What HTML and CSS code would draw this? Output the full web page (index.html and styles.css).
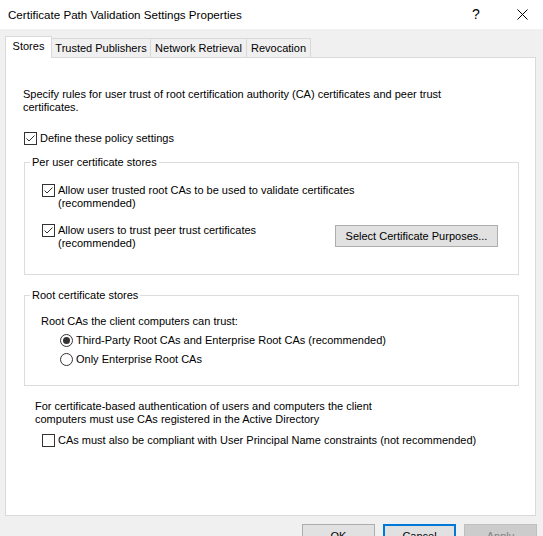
FILE: index.html
```html
<!DOCTYPE html>
<html>
<head>
<meta charset="utf-8">
<link rel="stylesheet" href="styles.css">
</head>
<body>
<div class="titlebar">
  <span class="title">Certificate Path Validation Settings Properties</span>
  <div class="caps">
    <span class="cap help">?</span>
    <span class="cap close"><svg width="11" height="11" viewBox="0 0 11 11"><path d="M0.5 0.5L10.5 10.5M10.5 0.5L0.5 10.5" stroke="#000" stroke-width="1" fill="none"/></svg></span>
  </div>
</div>
<div class="main">
  <div class="tabs">
    <div class="tab active t-stores">Stores</div>
    <div class="tab t-trusted">Trusted Publishers</div>
    <div class="tab t-network">Network Retrieval</div>
    <div class="tab t-revocation">Revocation</div>
  </div>
  <div class="panel">
    <p class="intro">Specify rules for user trust of root certification authority (CA) certificates and peer trust<br>certificates.</p>
    <div class="check define">
      <svg class="box" width="13" height="13" viewBox="0 0 13 13"><rect x="0.5" y="0.5" width="12" height="12" fill="#fff" stroke="#333"/><path d="M2.5 6.5L5 9L10.5 3.5" stroke="#333" fill="none"/></svg>
      <span>Define these policy settings</span>
    </div>
    <fieldset class="group g1">
      <legend>Per user certificate stores</legend>
      <div class="group-body">
        <div class="check">
          <svg class="box" width="13" height="13" viewBox="0 0 13 13"><rect x="0.5" y="0.5" width="12" height="12" fill="#fff" stroke="#333"/><path d="M2.5 6.5L5 9L10.5 3.5" stroke="#333" fill="none"/></svg>
          <span>Allow user trusted root CAs to be used to validate certificates<br>(recommended)</span>
        </div>
        <div class="row2">
          <div class="check">
            <svg class="box" width="13" height="13" viewBox="0 0 13 13"><rect x="0.5" y="0.5" width="12" height="12" fill="#fff" stroke="#333"/><path d="M2.5 6.5L5 9L10.5 3.5" stroke="#333" fill="none"/></svg>
            <span>Allow users to trust peer trust certificates<br>(recommended)</span>
          </div>
          <button class="btn purposes">Select Certificate Purposes...</button>
        </div>
      </div>
    </fieldset>
    <fieldset class="group g2">
      <legend>Root certificate stores</legend>
      <div class="group-body">
        <p class="label">Root CAs the client computers can trust:</p>
        <div class="radio">
          <svg class="box" width="13" height="13" viewBox="0 0 13 13"><circle cx="6.5" cy="6.5" r="6" fill="#fff" stroke="#333"/><circle cx="6.5" cy="6.5" r="3.5" fill="#333"/></svg>
          <span>Third-Party Root CAs and Enterprise Root CAs (recommended)</span>
        </div>
        <div class="radio">
          <svg class="box" width="13" height="13" viewBox="0 0 13 13"><circle cx="6.5" cy="6.5" r="6" fill="#fff" stroke="#333"/></svg>
          <span>Only Enterprise Root CAs</span>
        </div>
      </div>
    </fieldset>
    <p class="note">For certificate-based authentication of users and computers the client<br>computers must use CAs registered in the Active Directory</p>
    <div class="check upn">
      <svg class="box" width="13" height="13" viewBox="0 0 13 13"><rect x="0.5" y="0.5" width="12" height="12" fill="#fff" stroke="#333"/></svg>
      <span>CAs must also be compliant with User Principal Name constraints (not recommended)</span>
    </div>
  </div>
  <div class="buttons">
    <button class="btn dlg">OK</button>
    <button class="btn dlg default">Cancel</button>
    <button class="btn dlg disabled">Apply</button>
  </div>
</div>
</body>
</html>
```
FILE: styles.css
```css
html, body {
  margin: 0;
  padding: 0;
}
body {
  width: 543px;
  height: 536px;
  overflow: hidden;
  background: #f0f0f0;
  font-family: "Liberation Sans", Arial, sans-serif;
  font-size: 11px;
  line-height: 13px;
  color: #000;
}
.titlebar {
  height: 29px;
  background: #fff;
  display: flex;
  align-items: center;
}
.title {
  flex: 1;
  padding-left: 8px;
  font-size: 11.6px;
}
.caps {
  display: flex;
  margin-right: -2px;
  height: 29px;
}
.cap {
  width: 46px;
  height: 29px;
  display: flex;
  align-items: center;
  justify-content: center;
}
.help {
  font-size: 14px;
  padding-bottom: 1px;
  box-sizing: border-box;
}
.main {
  padding-top: 7px;
}
.tabs {
  display: flex;
  align-items: flex-end;
  margin-left: 5px;
  height: 21px;
}
.tab {
  box-sizing: border-box;
  height: 19px;
  line-height: 18px;
  padding: 0;
  text-align: center;
  border: 1px solid #d9d9d9;
  border-bottom: none;
  background: #f0f0f0;
  margin-left: -1px;
  white-space: nowrap;
}
.tab:first-child {
  margin-left: 0;
}
.t-stores { width: 47px; }
.t-trusted { width: 100px; }
.t-network { width: 97px; }
.t-revocation { width: 65px; }
.tab.active {
  position: relative;
  z-index: 1;
  height: 22px;
  line-height: 19px;
  margin-bottom: -1px;
  background: #fff;
}
.panel {
  box-sizing: border-box;
  height: 459px;
  margin: 0 7px 0 5px;
  border: 1px solid #d9d9d9;
  background: #fff;
  padding-top: 30px;
}
.intro {
  margin: 0 0 0 17px;
}
.check, .radio {
  display: flex;
  align-items: flex-start;
  gap: 3px;
}
.box {
  flex: none;
  display: block;
}
.define {
  margin: 18px 0 0 18px;
}
.group {
  box-sizing: border-box;
  width: 495px;
  margin: 0 0 0 18px;
  border: 1px solid #dcdcdc;
  padding: 0;
  min-width: 0;
}
.group legend {
  padding: 0 2px;
  margin-left: 5px;
  line-height: 13px;
}
.g1 {
  margin-top: 11px;
  height: 119px;
}
.g1 .group-body {
  padding: 15px 0 0 17px;
}
.row2 {
  display: flex;
  align-items: flex-start;
  justify-content: space-between;
  margin-top: 14px;
}
.btn {
  font-family: "Liberation Sans", Arial, sans-serif;
  font-size: 11px;
  color: #000;
  background: #e1e1e1;
  border: 1px solid #adadad;
  padding: 0;
  margin: 0;
  box-sizing: border-box;
}
.purposes {
  width: 163px;
  height: 22px;
  margin: 1px 20px 0 0;
}
.g2 {
  margin-top: 14px;
  height: 97px;
}
.g2 .group-body {
  padding: 13px 0 0 16px;
}
.label {
  margin: 0;
}
.radio {
  margin: 6px 0 0 19px;
}
.note {
  margin: 14px 0 0 29px;
}
.upn {
  margin: 8px 0 0 36px;
}
.buttons {
  display: flex;
  justify-content: flex-end;
  gap: 8px;
  padding-right: 6px;
  margin-top: 8px;
}
.dlg {
  width: 73px;
  height: 23px;
}
.default {
  border: 2px solid #0078d7;
}
.disabled {
  background: #cccccc;
  border-color: #bfbfbf;
  color: #838383;
}
```
